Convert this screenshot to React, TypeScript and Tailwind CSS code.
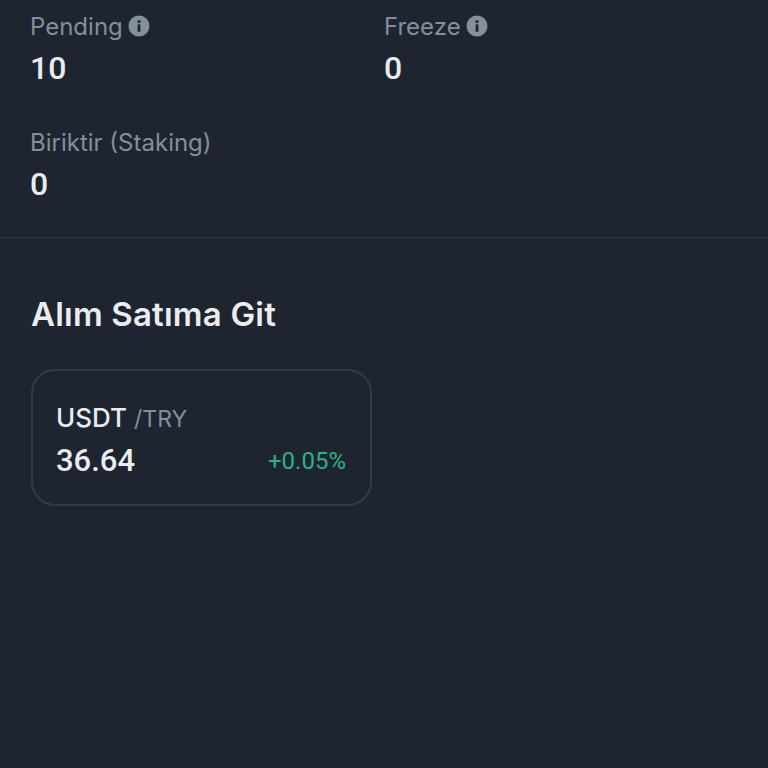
import React from 'react';

const InfoIcon = () => (
  <svg width="22" height="22" viewBox="0 0 22 22" className="shrink-0 -mt-[2px]">
    <circle cx="11" cy="11" r="10.5" fill="#848e9c" />
    <rect x="9.6" y="9.4" width="2.8" height="7.4" fill="#1e2530" />
    <rect x="9.6" y="5.2" width="2.8" height="2.8" fill="#1e2530" />
  </svg>
);

const Stat = ({ label, value, info }: { label: string; value: string; info?: boolean }) => (
  <div className="flex flex-col">
    <div className="flex items-center gap-[5px] h-[28px] text-[24px] leading-none text-[#848e9c] font-['Inter',sans-serif]">
      <span>{label}</span>
      {info && <InfoIcon />}
    </div>
    <div className="mt-[9px] text-[32px] leading-[36px] font-medium text-[#eaecef] font-['Roboto',sans-serif]">{value}</div>
  </div>
);

const App: React.FC = () => {
  return (
    <div className="w-[768px] h-[768px] overflow-hidden bg-[#1e2530] font-['Inter',sans-serif]">
      <div className="h-[238px] border-b border-[#2f3742] px-[30px] pt-[13px]">
        <div className="grid grid-cols-[354px_1fr] gap-y-[43px]">
          <Stat label="Pending" value="10" info />
          <Stat label="Freeze" value="0" info />
          <Stat label="Biriktir (Staking)" value="0" />
        </div>
      </div>
      <div className="px-[30px] pt-[56px]">
        <h2 className="ml-px text-[33px] leading-[40px] tracking-[0.2px] font-semibold text-[#eaecef]">Alım Satıma Git</h2>
        <div className="mt-[35px] ml-px w-[341px] h-[137px] rounded-[24px] border-2 border-[#333b47] pl-[23px] pr-[24px] pt-[29px]">
          <div className="flex items-baseline gap-[7px]">
            <span className="text-[26px] leading-[36px] font-medium text-[#eaecef]">USDT</span>
            <span className="text-[23px] leading-[36px] text-[#848e9c]">/TRY</span>
          </div>
          <div className="mt-[6px] flex items-center justify-between">
            <span className="text-[31px] leading-[36px] font-medium text-[#eaecef] font-['Roboto',sans-serif]">36.64</span>
            <span className="text-[24px] leading-[36px] text-[#2fb083] font-['Roboto',sans-serif]">+0.05%</span>
          </div>
        </div>
      </div>
    </div>
  );
};

export default App;
